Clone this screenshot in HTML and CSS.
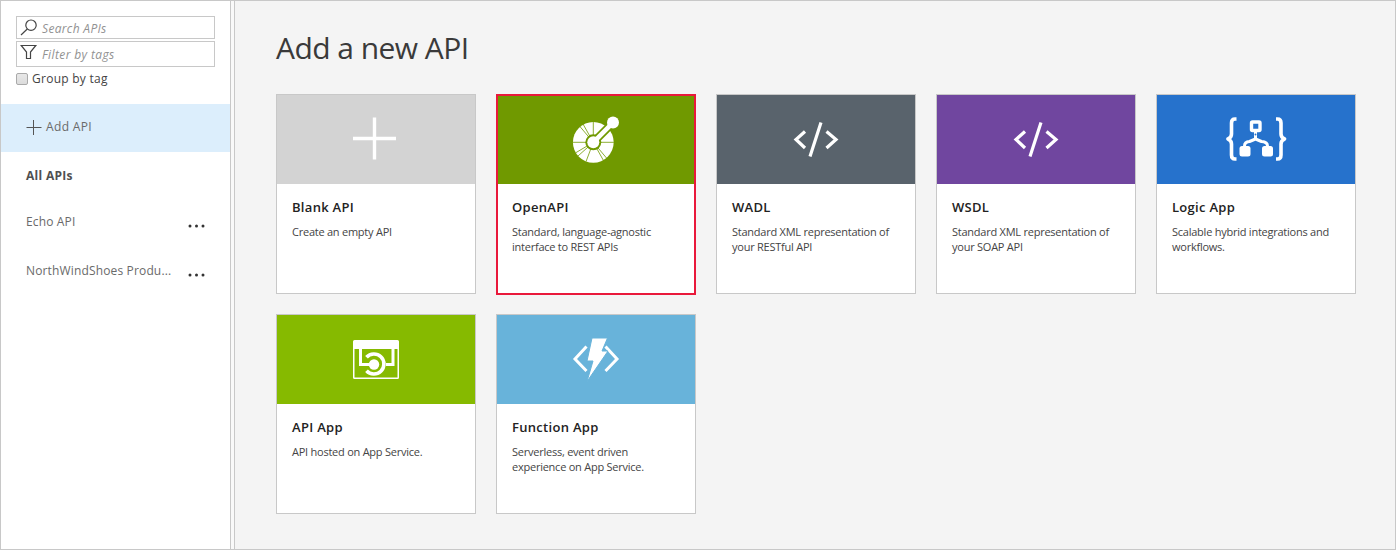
FILE: index.html
```html
<!DOCTYPE html>
<html lang="en">
<head>
<meta charset="utf-8">
<title>Add a new API</title>
<link rel="stylesheet" href="styles.css">
</head>
<body>
<div class="frame">
  <aside class="sidebar">
    <div class="filters">
      <label class="field field-search">
        <svg class="field-icon" width="18" height="18" viewBox="0 0 18 18"><circle cx="11" cy="6.2" r="5.2" /><path d="M7.300 10 1 16" /></svg>
        <span>Search APIs</span>
      </label>
      <label class="field field-tags">
        <svg class="field-icon" width="18" height="18" viewBox="0 0 18 18"><path d="M1.200 1.500h14.600L10.500 8v6.500h-4V8z" /></svg>
        <span>Filter by tags</span>
      </label>
      <div class="group"><span class="checkbox"></span><span>Group by tag</span></div>
    </div>
    <nav class="nav">
      <div class="nav-add"><svg width="16" height="16" viewBox="0 0 16 16"><path d="M.5 8.500h15M7.500 1v15" /></svg><span>Add API</span></div>
      <div class="nav-all">All APIs</div>
      <div class="nav-item"><span>Echo API</span><svg width="17" height="4" viewBox="0 0 17 4"><circle cx="2" cy="2" r="1.500"/><circle cx="8.500" cy="2" r="1.500"/><circle cx="15" cy="2" r="1.500"/></svg></div>
      <div class="nav-item"><span>NorthWindShoes Produ...</span><svg width="17" height="4" viewBox="0 0 17 4"><circle cx="2" cy="2" r="1.500"/><circle cx="8.500" cy="2" r="1.500"/><circle cx="15" cy="2" r="1.500"/></svg></div>
    </nav>
  </aside>
  <div class="splitter"></div>
  <main class="main">
    <h1>Add a new API</h1>
    <div class="cards">
      <section class="card blank">
        <div class="banner"><svg viewBox="0 0 200 90"><path class="stroke" stroke-width="3.400" d="M77 43.500h43M98.500 22.500v42" /></svg></div>
        <div class="body"><h2>Blank API</h2><p>Create an empty API</p></div>
      </section>
      <section class="card openapi">
        <div class="banner"><svg viewBox="0 0 200 90">
          <circle cx="97.300" cy="47.300" r="20.400" fill="#fff"/>
          <path class="cut" d="M97.300 47.300V26.500M97.300 47.300H76M97.300 47.300h21M97.300 47.300 84 31.600M97.300 47.300 87 29M97.300 47.300 80 57.600M97.300 47.300 82 61M97.300 47.300 90 66.600M97.300 47.300 107.500 65.600M97.300 47.300 110.500 63"/>
          <circle cx="97.300" cy="47.300" r="8" fill="#709900"/>
          <path d="M97.300 47.300 117 27.600" stroke="#709900" stroke-width="8"/>
          <path class="stroke" d="M97.300 47.300 117 27.600" stroke-width="4.600"/>
          <circle cx="97.300" cy="47.300" r="6" fill="#fff"/><circle cx="117" cy="27.600" r="6" fill="#fff"/>
        </svg></div>
        <div class="body"><h2>OpenAPI</h2><p>Standard, language-agnostic<br>interface to REST APIs</p></div>
      </section>
      <section class="card wadl">
        <div class="banner"><svg viewBox="0 0 200 90"><path class="stroke" stroke-width="3.200" d="M89 36.500 80 44.500l9 8.500M110.500 36.500l9.500 8-9.500 8.500M105 27.500 94 61.500"/></svg></div>
        <div class="body"><h2>WADL</h2><p>Standard XML representation of<br>your RESTful API</p></div>
      </section>
      <section class="card wsdl">
        <div class="banner"><svg viewBox="0 0 200 90"><path class="stroke" stroke-width="3.200" d="M89 36.500 80 44.500l9 8.500M110.500 36.500l9.500 8-9.500 8.500M105 27.500 94 61.500"/></svg></div>
        <div class="body"><h2>WSDL</h2><p>Standard XML representation of<br>your SOAP API</p></div>
      </section>
      <section class="card logic">
        <div class="banner"><svg viewBox="0 0 200 90">
          <path class="stroke" stroke-width="3.600" stroke-linejoin="round" d="M80.500 24h-1.500q-3.500 0-3.500 4v11q0 3.500-3.500 5 3.500 1.500 3.500 5v11q0 4 3.500 4h1.500M120 24h1.500q3.500 0 3.500 4v11q0 3.500 3.500 5-3.500 1.500-3.500 5v11q0 4-3.500 4h-1.500"/>
          <rect x="95.500" y="27" width="8.500" height="8.500" rx="1" fill="none" stroke="#fff" stroke-width="3.400"/>
          <path class="stroke" stroke-width="3" stroke-linejoin="round" d="M99.500 37v7M88.500 54v-3q0-4 5-4.500l6-2.500 6 2.500q6 .5 6 4.500v3"/>
          <circle cx="99.500" cy="39.500" r="1" fill="#2672cc"/>
          <rect x="83.500" y="51" width="11" height="10.500" rx="2.500" fill="#fff"/><rect x="106" y="51" width="11" height="10.500" rx="2.500" fill="#fff"/>
        </svg></div>
        <div class="body"><h2>Logic App</h2><p>Scalable hybrid integrations and<br>workflows.</p></div>
      </section>
      <section class="card apiapp">
        <div class="banner"><svg viewBox="0 0 200 90">
          <path fill="#fff" fill-rule="evenodd" d="M78.500 25h43q1.500 0 1.500 1.500v36q0 1.500-1.500 1.500H78.500q-1.500 0-1.500-1.500v-36Q77 25 78.500 25M78.500 34v28.500h43V34z"/>
          <path class="stroke" stroke-width="3" d="M84.500 33v16.500h12M117 33v16.500h-7"/>
          <path class="stroke" stroke-width="3.600" d="M90.500 42.300a10 10 0 1 1 0 13.400"/>
          <circle cx="98" cy="49.500" r="5.200" fill="#fff"/>
        </svg></div>
        <div class="body"><h2>API App</h2><p>API hosted on App Service.</p></div>
      </section>
      <section class="card function">
        <div class="banner"><svg viewBox="0 0 200 90">
          <path class="stroke" stroke-width="3" d="M90.500 31.500 79 44l11.500 12M109.500 31.500 121 44l-11.500 12"/>
          <path fill="#fff" stroke="#68b3da" stroke-width="1" d="M96 23h15.500l-5.500 13h6L91 66.500 97 46h-6z"/>
        </svg></div>
        <div class="body"><h2>Function App</h2><p>Serverless, event driven<br>experience on App Service.</p></div>
      </section>
    </div>
  </main>
</div>
</body>
</html>
```

FILE: styles.css
```css
* { box-sizing: border-box; }
body { margin: 0; font-family: "Open Sans", "Noto Sans", sans-serif; color: #444; background: #fff; }
h1, h2, p { margin: 0; }
.frame { display: flex; width: 1396px; height: 550px; border: 1px solid #c8c8c8; background: #f4f4f4; overflow: hidden; }
.sidebar { width: 229px; background: #fff; flex: none; }
.splitter { width: 5px; flex: none; border: solid #c8c8c8; border-width: 0 1px; background: #f9f9f9; }
.filters { padding: 15px 15px 0; height: 103px; }
.field { display: flex; align-items: flex-start; gap: 4px; border: 1px solid #c8c8c8; padding-left: 3px; font-size: 12px; font-style: italic; color: #929292; line-height: 16px; }
.field-search { height: 23px; }
.field-search span { padding-top: 4px; letter-spacing: .33px; }
.field-tags { height: 26px; margin-top: 2px; }
.field-tags span { padding-top: 5px; letter-spacing: .38px; }
.field-icon { fill: none; stroke: #444; stroke-width: 1.2; margin-top: 2px; flex: none; }
.group { display: flex; align-items: center; gap: 4px; margin-top: 3px; font-size: 12px; line-height: 18px; letter-spacing: .26px; }
.checkbox { width: 12px; height: 12px; border: 1px solid #aaa; border-radius: 2px; background: linear-gradient(#e8e8e8, #dcdcdc); }
.nav { font-size: 12px; color: #6a6a6a; letter-spacing: .15px; }
.nav-add { display: flex; align-items: center; height: 48px; background: #dceefc; padding: 0 0 3px 25px; gap: 4px; letter-spacing: .35px; }
.nav-add svg { fill: none; stroke: #555; stroke-width: 1; }
.nav-all { height: 47px; line-height: 48px; padding-left: 25px; font-weight: 700; color: #505050; letter-spacing: .3px; }
.nav-item { display: flex; align-items: center; justify-content: space-between; height: 49px; padding: 0 25px 4px; }
.nav-item svg { fill: #333; margin-top: 9px; }
.main { flex: 1; padding: 27px 0 0 41px; }
h1 { font-size: 30px; line-height: 40px; font-weight: 400; letter-spacing: -.55px; color: #3a3a3a; }
.cards { display: grid; grid-template-columns: repeat(5, 200px); grid-auto-rows: 200px; gap: 20px; margin-top: 26px; }
.card { border: 1px solid #c8c8c8; background: #fff; }
.banner { display: flow-root; height: 89px; }
.banner svg { display: block; width: 200px; height: 90px; margin: 0 0 0 -1px; overflow: hidden; }
.stroke { fill: none; stroke: #fff; }
.cut { fill: none; stroke: #709900; stroke-width: .8; }
.blank .banner { background: #d3d3d3; }
.openapi { border: 2px solid #e9193b; height: 201px; }
.openapi .banner { background: #709900; height: 88px; }
.openapi .banner svg { margin: -1px 0 0 -2px; }
.openapi .body { padding-left: 14px; }
.wadl .banner { background: #59636c; }
.wsdl .banner { background: #70469f; }
.logic .banner { background: #2672cc; }
.apiapp .banner { background: #86ba00; }
.function .banner { background: #68b3da; }
.body { padding: 13px 0 0 15px; white-space: nowrap; }
h2 { font-size: 13px; line-height: 20px; font-weight: 600; color: #222; letter-spacing: .3px; }
.body p { margin-top: 7px; font-size: 11px; line-height: 15px; letter-spacing: -.24px; }
.banner, .card { max-width: 200px; }
.banner svg { position: static; }
```
